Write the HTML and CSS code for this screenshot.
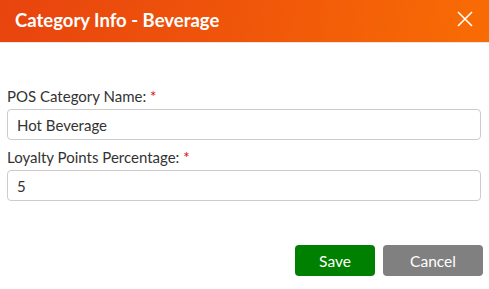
FILE: index.html
```html
<!DOCTYPE html>
<html lang="en">
<head>
  <meta charset="UTF-8">
  <meta name="viewport" content="width=device-width, initial-scale=1.0">
  <title>Category Info</title>
  <link rel="stylesheet" href="styles.css">
</head>
<body>
  <div class="modal">
    <div class="modal-header">
      <h2>Category Info - Beverage</h2>
      <span class="close-btn">
        <svg width="16" height="16" viewBox="0 0 16 16">
          <path d="M1 1 L15 15 M15 1 L1 15" stroke="#fff" stroke-width="1.6" fill="none"/>
        </svg>
      </span>
    </div>

    <div class="modal-body">
      <div class="form-group">
        <label>POS Category Name: <span class="required">*</span></label>
        <input type="text" value="Hot Beverage">
      </div>
      <div class="form-group">
        <label>Loyalty Points Percentage: <span class="required">*</span></label>
        <input type="text" value="5">
      </div>
    </div>

    <div class="modal-footer">
      <button class="btn btn-save">Save</button>
      <button class="btn btn-cancel">Cancel</button>
    </div>
  </div>
</body>
</html>
```

FILE: styles.css
```css
body {
  margin: 0;
  padding: 0;
  font-family: 'Lato', 'Open Sans', sans-serif;
  color: #333;
  background: #fff;
}

.modal {
  width: 489px;
  height: 289px;
  display: flex;
  flex-direction: column;
}

.modal-header {
  height: 42px;
  background: linear-gradient(100deg, #e8440f 0%, #f0560a 50%, #f86c04 100%);
  border-bottom: 1px solid #e6e6e6;
  display: flex;
  align-items: center;
  justify-content: space-between;
  padding: 0 16px 0 15px;
}

.modal-header h2 {
  margin: 0;
  color: #fff;
  font-size: 18.5px;
  font-weight: bold;
  padding-bottom: 2px;
}

.close-btn {
  display: flex;
  padding-bottom: 4px;
}

.modal-body {
  padding: 44px 8px 0 7px;
}

.form-group {
  margin-bottom: 8px;
}

.form-group label {
  display: block;
  font-size: 15px;
  margin-bottom: 4px;
}

.required {
  color: #e00000;
}

.form-group input {
  width: 100%;
  box-sizing: border-box;
  height: 31px;
  border: 1px solid #ccc;
  border-radius: 4px;
  padding: 0 9px;
  font-family: inherit;
  font-size: 15px;
  color: #333;
}

.modal-footer {
  display: flex;
  justify-content: flex-end;
  gap: 8px;
  padding: 36px 6px 0 0;
}

.btn {
  height: 31px;
  border: none;
  border-radius: 4px;
  color: #fff;
  font-family: inherit;
  font-size: 15.5px;
}

.btn-save {
  width: 80px;
  background: #008000;
}

.btn-cancel {
  width: 100px;
  background: #808080;
}
```
